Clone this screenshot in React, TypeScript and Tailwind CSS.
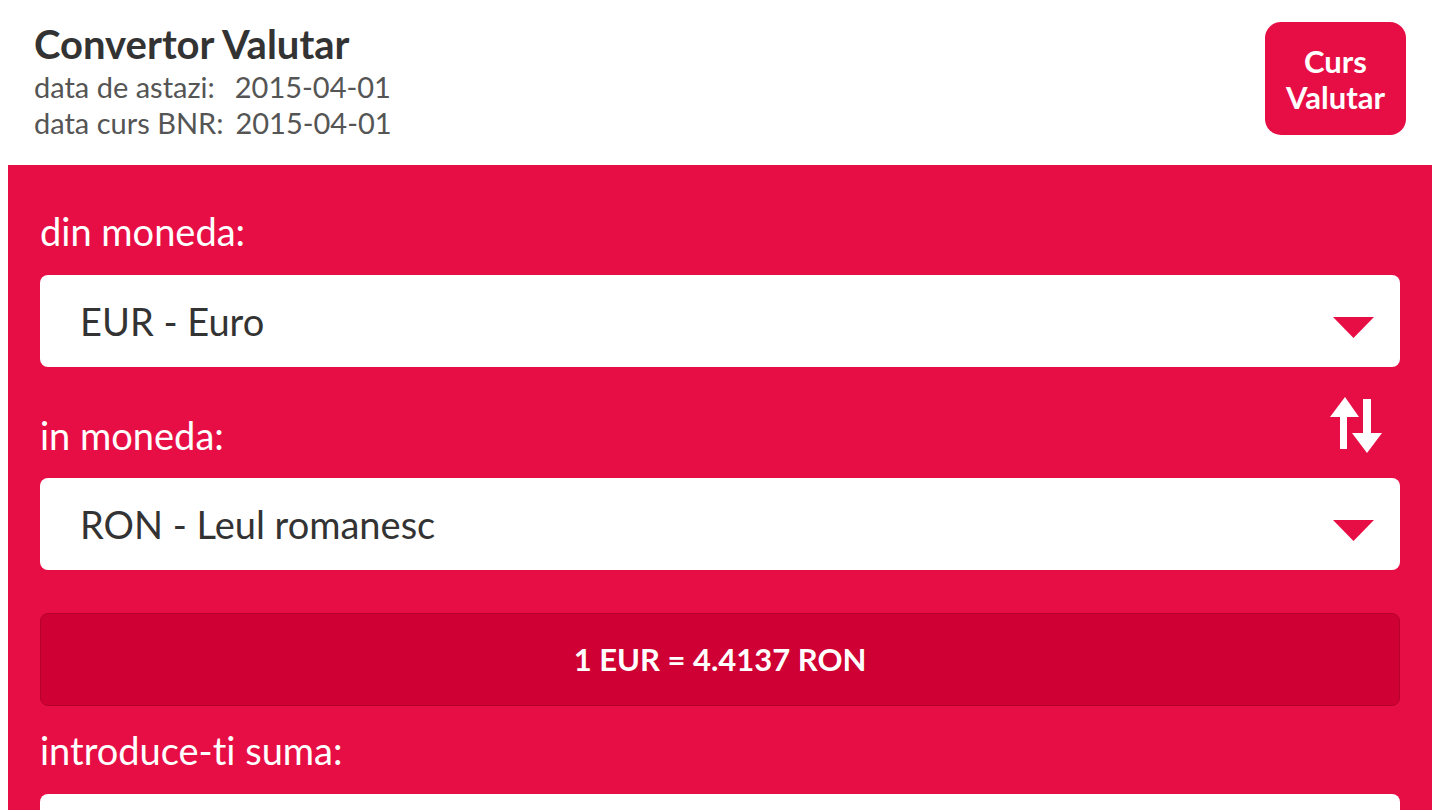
import React from "react";

const font = { fontFamily: "Lato, 'Open Sans', sans-serif", fontVariantLigatures: "none" as const };

function Caret() {
  return (
    <svg width="41" height="21" viewBox="0 0 41 21" className="mt-[12px]" aria-hidden="true">
      <polygon points="0,0 41,0 20.5,21" fill="#e70e45" />
    </svg>
  );
}

function SwapIcon() {
  return (
    <svg width="52" height="56" viewBox="0 0 52 56" aria-hidden="true">
      <polygon points="15,0 0,20 10,20 10,52 17,52 17,20 29,20" fill="#fff" />
      <polygon points="33,2 41,2 41,36 52,36 37,56 22,36 33,36" fill="#fff" />
    </svg>
  );
}

function Select({ label }: { label: string }) {
  return (
    <div className="flex h-[92px] items-center justify-between rounded-lg bg-white pl-[40px] pr-[26px]">
      <span className="text-[38px] text-[#333]">{label}</span>
      <Caret />
    </div>
  );
}

export default function App() {
  return (
    <div className="min-h-[810px] w-full bg-white" style={font}>
      {/* Header */}
      <div className="flex items-start justify-between px-[34px] pt-[22px]">
        <div>
          <h1 className="text-[40px] font-bold leading-[44px] text-[#333]">Convertor Valutar</h1>
          <div className="mt-[3px] text-[29px] leading-[36px] text-[#555]">
            <div>
              data de astazi:<span className="ml-[20px]">2015-04-01</span>
            </div>
            <div>
              data curs BNR:<span className="ml-[12px]">2015-04-01</span>
            </div>
          </div>
        </div>
        <button
          type="button"
          className="flex h-[113px] w-[141px] flex-col items-center justify-center rounded-[16px] bg-[#e70e45] text-[31px] font-bold leading-[36px] text-white"
        >
          <span>Curs</span>
          <span>Valutar</span>
        </button>
      </div>

      {/* Converter panel */}
      <div className="mx-[8px] mt-[24px] bg-[#e70e45] px-[32px] pt-[46px] pb-[40px]">
        <div className="text-[38px] leading-[40px] text-white">din moneda:</div>
        <div className="mt-[24px]">
          <Select label="EUR - Euro" />
        </div>

        <div className="mt-[30px] flex items-start justify-between pr-[18px]">
          <span className="mt-[18px] text-[38px] leading-[40px] text-white">in moneda:</span>
          <SwapIcon />
        </div>
        <div className="mt-[23px]">
          <Select label="RON - Leul romanesc" />
        </div>

        <div className="mt-[43px] flex h-[93px] items-center justify-center rounded-lg border border-[#b5002c] bg-[#cf0033]">
          <span className="text-[31px] font-bold text-white">1 EUR = 4.4137 RON</span>
        </div>

        <div className="mt-[24px] text-[38px] leading-[40px] text-white">introduce-ti suma:</div>
        <div className="mt-[24px] h-[92px] rounded-lg bg-white" />
      </div>
    </div>
  );
}
